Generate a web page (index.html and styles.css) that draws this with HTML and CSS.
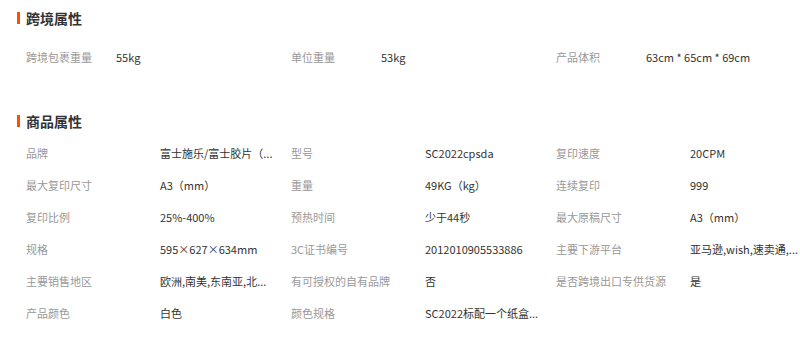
FILE: index.html
```html
<!DOCTYPE html>
<html lang="zh-CN">
<head>
<meta charset="utf-8">
<title>属性</title>
<link rel="stylesheet" href="styles.css">
</head>
<body>
<section class="block block-first">
  <h2 class="title"><span class="bar"></span>跨境属性</h2>
  <div class="grid cross">
    <div class="item"><span class="label">跨境包裹重量</span><span class="value">55kg</span></div>
    <div class="item"><span class="label">单位重量</span><span class="value">53kg</span></div>
    <div class="item"><span class="label">产品体积</span><span class="value">63cm * 65cm * 69cm</span></div>
  </div>
</section>
<section class="block block-second">
  <h2 class="title"><span class="bar"></span>商品属性</h2>
  <div class="grid attrs">
    <div class="item"><span class="label">品牌</span><span class="value">富士施乐/富士胶片（...</span></div>
    <div class="item"><span class="label">型号</span><span class="value">SC2022cpsda</span></div>
    <div class="item"><span class="label">复印速度</span><span class="value">20CPM</span></div>
    <div class="item"><span class="label">最大复印尺寸</span><span class="value">A3（mm）</span></div>
    <div class="item"><span class="label">重量</span><span class="value">49KG（kg）</span></div>
    <div class="item"><span class="label">连续复印</span><span class="value">999</span></div>
    <div class="item"><span class="label">复印比例</span><span class="value">25%-400%</span></div>
    <div class="item"><span class="label">预热时间</span><span class="value">少于44秒</span></div>
    <div class="item"><span class="label">最大原稿尺寸</span><span class="value">A3（mm）</span></div>
    <div class="item"><span class="label">规格</span><span class="value">595×627×634mm</span></div>
    <div class="item"><span class="label">3C证书编号</span><span class="value">2012010905533886</span></div>
    <div class="item"><span class="label">主要下游平台</span><span class="value">亚马逊,wish,速卖通,...</span></div>
    <div class="item"><span class="label">主要销售地区</span><span class="value">欧洲,南美,东南亚,北...</span></div>
    <div class="item"><span class="label">有可授权的自有品牌</span><span class="value">否</span></div>
    <div class="item"><span class="label">是否跨境出口专供货源</span><span class="value">是</span></div>
    <div class="item"><span class="label">产品颜色</span><span class="value">白色</span></div>
    <div class="item"><span class="label">颜色规格</span><span class="value">SC2022标配一个纸盒...</span></div>
  </div>
</section>
</body>
</html>
```
FILE: styles.css
```css
html, body {
  margin: 0;
  padding: 0;
  background: #ffffff;
  overflow: hidden;
}
body {
  font-family: "Noto Sans CJK SC", "Noto Sans", sans-serif;
  font-size: 11px;
  color: #333333;
}
.block {
  padding-left: 17px;
}
.block-first {
  padding-top: 2px;
}
.block-second {
  margin-top: 32px;
}
.title {
  display: flex;
  align-items: center;
  gap: 6px;
  height: 32px;
  margin: 0;
  font-size: 14px;
  font-weight: bold;
  color: #333333;
}
.bar {
  display: block;
  width: 3px;
  height: 12px;
  background: #ff5000;
}
.grid {
  display: grid;
  grid-template-columns: 265px 265px 1fr;
  padding-left: 9px;
  grid-auto-rows: 32px;
}
.cross {
  margin-top: 7px;
}
.item {
  display: flex;
  align-items: center;
  min-width: 0;
}
.label {
  flex: none;
  color: #999999;
  white-space: nowrap;
}
.value {
  color: #333333;
  white-space: nowrap;
}
.cross .label {
  width: 90px;
}
.attrs .label {
  width: 134px;
}
```
